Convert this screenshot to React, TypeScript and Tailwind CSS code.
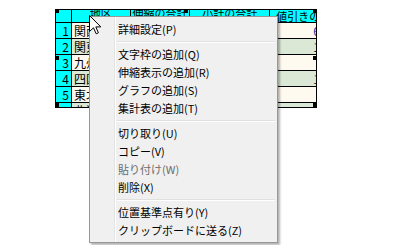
import React from 'react';

type Item = { label: string; disabled?: boolean } | 'sep';

const menuItems: Item[] = [
    { label: '詳細設定(P)' },
    'sep',
    { label: '文字枠の追加(Q)' },
    { label: '伸縮表示の追加(R)' },
    { label: 'グラフの追加(S)' },
    { label: '集計表の追加(T)' },
    'sep',
    { label: '切り取り(U)' },
    { label: 'コピー(V)' },
    { label: '貼り付け(W)', disabled: true },
    { label: '削除(X)' },
    'sep',
    { label: '位置基準点有り(Y)' },
    { label: 'クリップボードに送る(Z)' },
];

const regions = ['関西', '関東', '九州', '四国', '東北', '北海道'];
const lastCol: { text: string; color: string }[] = [
    { text: '6', color: 'text-[#1d2fa8]' },
    { text: '1', color: 'text-[#3a0d14]' },
    { text: '', color: '' },
    { text: '1', color: 'text-[#5a1030]' },
    { text: '', color: '' },
    { text: '', color: '' },
];

const font = { fontFamily: '"Noto Sans CJK JP", "Noto Sans", sans-serif' };

const Handle: React.FC<{ className: string }> = ({ className }) => (
    <div className={`absolute w-[4px] h-[4px] bg-black ${className}`} />
);

const Sheet: React.FC = () => (
    <div className="w-[262px] h-[99px] overflow-hidden border-l border-t border-b border-black text-black" style={font}>
        {/* header */}
        <div className="flex h-[13px] bg-[#00ffff] border-b border-black text-[11px] leading-[13px]">
            <div className="w-[16px] border-r border-black" />
            <div className="w-[59px] border-r border-black overflow-hidden text-center"><span className="relative top-[-3px]">地区</span></div>
            <div className="w-[60px] border-r border-black overflow-hidden text-center whitespace-nowrap"><span className="relative top-[-3px]">伸縮の合計</span></div>
            <div className="w-[80px] border-r border-black overflow-hidden text-center whitespace-nowrap"><span className="relative top-[-3px]">小計の合計</span></div>
            <div className="w-[47px] border-r border-black overflow-hidden whitespace-nowrap pl-[6px]">値引きの合計</div>
        </div>
        {regions.map((r, i) => {
            const bg = i % 2 === 0 ? 'bg-[#fffaf0]' : 'bg-[#dbe8d5]';
            return (
                <div key={r} className="flex h-[16px] border-b border-black text-[12px] leading-[15px]">
                    <div className="w-[16px] border-r border-black bg-[#00ffff] text-right pr-[2px]">{i + 1}</div>
                    <div className={`w-[59px] border-r border-black overflow-hidden whitespace-nowrap pl-[2px] ${bg}`}>{r}</div>
                    <div className={`w-[60px] border-r border-black ${bg}`} />
                    <div className={`w-[80px] border-r border-black ${bg}`} />
                    <div className={`w-[47px] border-r border-black overflow-hidden text-right pr-0 ${bg} ${lastCol[i].color}`}>
                        <span className="relative left-[4px]">{lastCol[i].text}</span>
                    </div>
                </div>
            );
        })}
    </div>
);

const ContextMenu: React.FC = () => (
    <div
        className="absolute left-[89px] top-[16px] w-[189px] flex bg-[#f0f0f0] border border-[#979797] shadow-[2px_2px_2px_rgba(0,0,0,0.3)]"
        style={font}
    >
        <div className="w-[25px] border-r border-[#e2e3e3]" />
        <div className="flex-1 border-l border-white py-[3px] pr-[2px]">
            {menuItems.map((it, i) =>
                it === 'sep' ? (
                    <div key={i} className="h-[7px] flex flex-col justify-center pl-[1px]">
                        <div className="h-px bg-[#e0e0e0]" />
                        <div className="h-px bg-white" />
                    </div>
                ) : (
                    <div
                        key={i}
                        className={`h-[18px] pl-[2px] flex items-center text-[11px] whitespace-nowrap ${it.disabled ? 'text-[#6d6d6d]' : 'text-black'}`}
                    >
                        {it.label}
                    </div>
                )
            )}
        </div>
    </div>
);

const Cursor: React.FC = () => (
    <svg className="absolute left-[89px] top-[15px]" width="13" height="20" viewBox="0 0 13 20">
        <path d="M0.5 0.5 L0.5 16.5 L4.5 12.8 L7.2 18.8 L9.4 17.8 L6.8 11.9 L11.8 11.9 Z" fill="#fff" stroke="#000" strokeWidth="1" strokeLinejoin="miter" />
    </svg>
);

const App: React.FC = () => (
    <div className="relative w-[406px] h-[245px] bg-white overflow-hidden">
        <div className="pt-[9px] pl-[55px]">
            <Sheet />
        </div>
        <Handle className="left-[55px] top-[9px]" />
        <Handle className="left-[184px] top-[9px]" />
        <Handle className="left-[313px] top-[9px]" />
        <Handle className="left-[55px] top-[56px]" />
        <Handle className="left-[313px] top-[56px]" />
        <Handle className="left-[55px] top-[103px]" />
        <Handle className="left-[313px] top-[103px]" />
        <ContextMenu />
        <Cursor />
    </div>
);

export default App;
